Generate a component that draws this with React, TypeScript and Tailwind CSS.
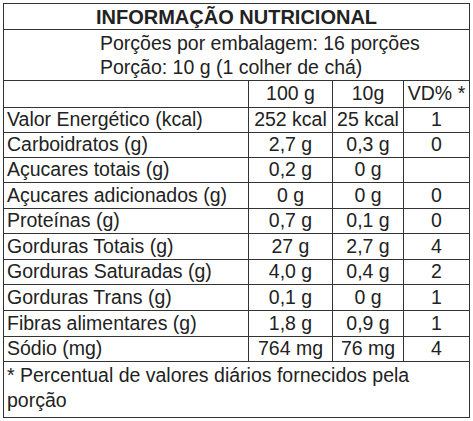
import React from 'react';

// Nutrition facts table (Brazilian label layout)
interface Row {
  label: string;
  per100: string;
  perPortion: string;
  vd: string;
  h: string;
}

const rows: Row[] = [
  { label: 'Valor Energético (kcal)', per100: '252 kcal', perPortion: '25 kcal', vd: '1', h: 'h-[25px]' },
  { label: 'Carboidratos (g)', per100: '2,7 g', perPortion: '0,3 g', vd: '0', h: 'h-[25px]' },
  { label: 'Açucares totais (g)', per100: '0,2 g', perPortion: '0 g', vd: '', h: 'h-[25px]' },
  { label: 'Açucares adicionados (g)', per100: '0 g', perPortion: '0 g', vd: '0', h: 'h-[26px]' },
  { label: 'Proteínas (g)', per100: '0,7 g', perPortion: '0,1 g', vd: '0', h: 'h-[25px]' },
  { label: 'Gorduras Totais (g)', per100: '27 g', perPortion: '2,7 g', vd: '4', h: 'h-[26px]' },
  { label: 'Gorduras Saturadas (g)', per100: '4,0 g', perPortion: '0,4 g', vd: '2', h: 'h-[25px]' },
  { label: 'Gorduras Trans (g)', per100: '0,1 g', perPortion: '0 g', vd: '1', h: 'h-[26px]' },
  { label: 'Fibras alimentares (g)', per100: '1,8 g', perPortion: '0,9 g', vd: '1', h: 'h-[26px]' },
  { label: 'Sódio (mg)', per100: '764 mg', perPortion: '76 mg', vd: '4', h: 'h-[25px]' },
];

const cell = 'flex items-center justify-center border-l border-[#333] whitespace-nowrap';

export default function App() {
  return (
    <div
      className="min-h-[421px] bg-white pl-[3px] pt-[3px] text-[19.5px] leading-none text-[#222]"
      style={{ fontFamily: '"Liberation Sans", Arial, sans-serif' }}
    >
      <div className="w-[467px] border border-[#333]">
        {/* Title */}
        <div className="flex h-[25px] items-center justify-center text-[20px] font-bold">
          INFORMAÇÃO NUTRICIONAL
        </div>

        {/* Portion info */}
        <div className="flex h-[51px] flex-col justify-center border-t border-[#333] pl-[96px] leading-[24.5px]">
          <div>Porções por embalagem: 16 porções</div>
          <div>Porção: 10 g (1 colher de chá)</div>
        </div>

        {/* Column headers */}
        <div className="flex h-[27px] border-t border-[#333]">
          <div className="w-[244px]" />
          <div className={`${cell} w-[84px]`}>100 g</div>
          <div className={`${cell} w-[71px]`}>10g</div>
          <div className={`${cell} w-[66px]`}>VD% *</div>
        </div>

        {rows.map((r) => (
          <div key={r.label} className={`flex ${r.h} border-t border-[#333]`}>
            <div className="flex w-[244px] items-center pl-[3px] whitespace-nowrap">{r.label}</div>
            <div className={`${cell} w-[84px]`}>{r.per100}</div>
            <div className={`${cell} w-[71px]`}>{r.perPortion}</div>
            <div className={`${cell} w-[66px]`}>{r.vd}</div>
          </div>
        ))}

        {/* Footnote */}
        <div className="h-[56px] border-t border-[#333] pl-[3px] pt-[1px] leading-[25px]">
          * Percentual de valores diários fornecidos pela porção
        </div>
      </div>
    </div>
  );
}
